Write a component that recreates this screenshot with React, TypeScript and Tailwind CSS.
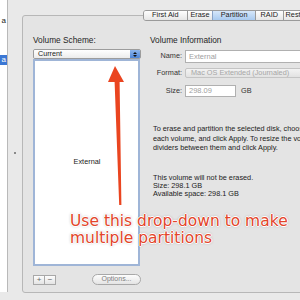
export default function App() {
  const tabBase =
    "h-full flex items-center justify-center border-l border-[#9a9a9a] bg-gradient-to-b from-[#fefefe] to-[#e6e6e6] text-[#222]";
  const btn =
    "border border-[#a8a8a8] bg-gradient-to-b from-[#fdfdfd] to-[#e4e4e4] flex items-center justify-center";
  return (
    <div className="relative w-[300px] h-[300px] overflow-hidden bg-[#e9e9e9] flex font-['Liberation_Sans',Arial,sans-serif] text-[7.3px] text-[#222]">
      {/* sidebar */}
      <div className="w-[8px] h-[292px] shrink-0 bg-white border-r border-[#b9b9b9] flex flex-col overflow-hidden">
        <div className="h-[16px]" />
        <div className="h-[10px] leading-[10px] flex justify-end pr-[1px] text-[8px]">a</div>
        <div className="h-[29px]" />
        <div className="h-[10px] leading-[10px] flex justify-end pr-[1px] text-[8px] bg-[#3b77d4] text-white">a</div>
      </div>
      {/* splitter */}
      <div className="w-[14px] shrink-0 flex justify-center pt-[152px]">
        <div className="w-[2px] h-[2px] rounded-full bg-[#6a6a6a]" />
      </div>
      {/* main */}
      <div className="flex-1 min-w-0 pt-[15px]">
        <div className="w-[300px] h-[278px] border border-[#b7b7b7] rounded-[3px] bg-[#e4e4e4] flex flex-col">
          {/* tabs */}
          <div className="-mt-[6px] ml-[120px] h-[11px] flex border border-[#9a9a9a] rounded-l-[3px] overflow-hidden w-[200px]">
            <div className="h-full w-[43px] flex items-center justify-center bg-gradient-to-b from-[#fefefe] to-[#e6e6e6]">First Aid</div>
            <div className={`${tabBase} w-[26px]`}>Erase</div>
            <div className="h-full w-[43px] flex items-center justify-center border-l border-[#8aa3c6] bg-gradient-to-b from-[#d6e7fa] to-[#a9caef]">Partition</div>
            <div className={`${tabBase} w-[28px]`}>RAID</div>
            <div className={`${tabBase} w-[60px] justify-start pl-[2px]`}>Restore</div>
          </div>
          <div className="flex pl-[10px]">
            {/* left column */}
            <div className="w-[108px] shrink-0 flex flex-col">
              <div className="mt-[14px] h-[10px] leading-[10px] text-[8.3px] text-[#1e1e1e]">Volume Scheme:</div>
              <div className="mt-[4px] h-[10px] flex rounded-[2px] border border-[#9c9c9c] overflow-hidden">
                <div className="flex-1 bg-gradient-to-b from-white to-[#ececec] pl-[4px] leading-[8px] text-[7.2px]">Current</div>
                <div className="w-[10px] bg-gradient-to-b from-[#8db5ec] to-[#4b84d9] flex flex-col items-center justify-center gap-[1px]">
                  <div className="w-0 h-0 border-l-[2px] border-r-[2px] border-b-[2px] border-l-transparent border-r-transparent border-b-[#111]" />
                  <div className="w-0 h-0 border-l-[2px] border-r-[2px] border-t-[2px] border-l-transparent border-r-transparent border-t-[#111]" />
                </div>
              </div>
              <div className="w-[107px] h-[207px] border-2 border-[#9fb5d7] bg-white flex items-center justify-center">
                <span className="pl-[1px]">External</span>
              </div>
              <div className="mt-[9px] h-[10px] flex">
                <div className={`${btn} w-[12px] h-[10px] text-[#666] text-[8px]`}>+</div>
                <div className={`${btn} w-[11px] h-[10px] border-l-0 text-[#666] text-[8px]`}>−</div>
                <div className={`${btn} ml-[36px] w-[49px] h-[11px] -mt-[1px] rounded-full text-[#808080] text-[7px]`}>Options...</div>
              </div>
            </div>
            {/* right column */}
            <div className="ml-[9px] flex-1 flex flex-col">
              <div className="mt-[14px] h-[10px] leading-[10px] text-[8.3px] text-[#1e1e1e] whitespace-nowrap">Volume Information</div>
              <div className="mt-[5px] h-[13px] flex items-center">
                <div className="w-[32px] text-right text-[#333]">Name:</div>
                <div className="ml-[3px] w-[130px] h-[13px] bg-white border border-[#b0b0b0] flex items-center pl-[3px] text-[#a0a0a0] text-[7.5px]">External</div>
              </div>
              <div className="mt-[5px] h-[10px] flex items-center">
                <div className="w-[32px] text-right text-[#333]">Format:</div>
                <div className="ml-[3px] w-[130px] h-[10px] rounded-[2px] bg-gradient-to-b from-[#f3f3f3] to-[#e2e2e2] border border-[#c4c4c4] flex items-center pl-[5px] text-[#a6a6a6] whitespace-nowrap">Mac OS Extended (Journaled)</div>
              </div>
              <div className="mt-[7px] h-[12px] flex items-center">
                <div className="w-[32px] text-right text-[#333]">Size:</div>
                <div className="ml-[3px] w-[51px] h-[12px] bg-white border border-[#b0b0b0] flex items-center pl-[3px] text-[#a0a0a0] text-[7.5px]">298.09</div>
                <div className="ml-[5px] text-[#333]">GB</div>
              </div>
              <div className="mt-[27px] flex flex-col whitespace-nowrap leading-[9.5px] pl-[3px]">
                <div>To erase and partition the selected disk, choose a layout from the Volume</div>
                <div>each volume, and click Apply. To resize the volumes, drag the</div>
                <div>dividers between them and click Apply.</div>
              </div>
              <div className="mt-[21px] flex flex-col whitespace-nowrap leading-[8.3px] pl-[3px]">
                <div>This volume will not be erased.</div>
                <div>Size: 298.1 GB</div>
                <div>Available space: 298.1 GB</div>
              </div>
            </div>
          </div>
        </div>
      </div>
      {/* annotation arrow */}
      <svg className="absolute left-0 top-0 pointer-events-none" width="300" height="300" viewBox="0 0 300 300">
        <polygon points="115,66 124,82 119.6,82 121.4,205 119.2,205 114.6,82 108,82" fill="#ea4520" />
      </svg>
      {/* annotation text */}
      <div className="absolute left-[70px] top-[212.6px] whitespace-nowrap font-['DejaVu_Sans',sans-serif] text-[15.5px] leading-[17.5px] text-[#e3452a] [text-shadow:-1px_0_#fff,1px_0_#fff,0_-1px_#fff,0_1px_#fff,0_0_3px_rgba(0,0,0,0.45)]">
        Use this drop-down to make
        <br />
        multiple partitions
      </div>
    </div>
  );
}
